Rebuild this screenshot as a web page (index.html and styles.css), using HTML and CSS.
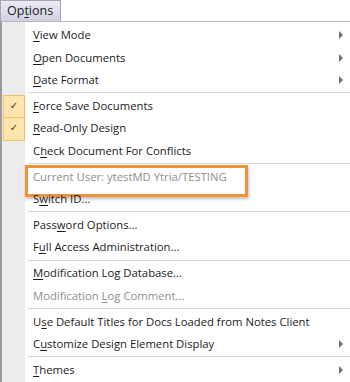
FILE: index.html
```html
<!DOCTYPE html>
<html lang="en">
<head>
  <meta charset="UTF-8" />
  <title>Options menu</title>
  <link rel="stylesheet" href="styles.css">
</head>
<body>
  <div class="menubar">
    <div class="tab">Op<u>t</u>ions</div>
  </div>
  <div class="menu">
    <div class="item sub"><u>V</u>iew Mode</div>
    <div class="item sub"><u>O</u>pen Documents</div>
    <div class="item sub"><u>D</u>ate Format</div>
    <div class="sep"></div>
    <div class="item checked"><u>F</u>orce Save Documents</div>
    <div class="item checked"><u>R</u>ead-Only Design</div>
    <div class="item">C<u>h</u>eck Document For Conflicts</div>
    <div class="sep"></div>
    <div class="item disabled marked">Current User: ytestMD Ytria/TESTING</div>
    <div class="item">S<u>w</u>itch ID...</div>
    <div class="sep"></div>
    <div class="item">Pass<u>w</u>ord Options...</div>
    <div class="item">F<u>u</u>ll Access Administration...</div>
    <div class="sep"></div>
    <div class="item"><u>M</u>odification Log Database...</div>
    <div class="item disabled">Modification <u>L</u>og Comment...</div>
    <div class="sep"></div>
    <div class="item">U<u>s</u>e Default Titles for Docs Loaded from Notes Client</div>
    <div class="item sub">C<u>u</u>stomize Design Element Display</div>
    <div class="sep"></div>
    <div class="item sub"><u>T</u>hemes</div>
  </div>
</body>
</html>
```

FILE: styles.css
```css
* {
  margin: 0;
  padding: 0;
  box-sizing: border-box;
}

body {
  width: 350px;
  height: 382px;
  overflow: hidden;
  background: #ffffff;
  font-family: 'Open Sans', sans-serif;
  font-size: 11.3px;
  color: #1b1b1b;
}

u {
  text-decoration-thickness: 1px;
  text-underline-offset: 2px;
}

.menubar {
  height: 21px;
  background: #ffffff;
}

.tab {
  width: 61px;
  height: 21px;
  padding: 2px 0 0 6px;
  border: 1px solid #a5a5b5;
  border-bottom: none;
  background: linear-gradient(#ececf4, #cfcfe0);
  font-size: 12.5px;
  line-height: 16px;
}

.menu {
  position: relative;
  height: 361px;
  border-left: 2px solid #9a9a9a;
  border-top: 1px solid #b8b8b8;
  background: linear-gradient(to right, #ececec 23px, #fbfbfb 23px, #fbfbfb 24px, #ffffff 24px);
  padding-top: 2px;
}

.item {
  position: relative;
  height: 22.5px;
  line-height: 22px;
  padding-left: 31px;
}

.item.disabled {
  color: #8e8e8e;
}

.sub::after {
  content: '';
  position: absolute;
  right: 7px;
  top: 7px;
  border-left: 4px solid #707070;
  border-top: 4px solid transparent;
  border-bottom: 4px solid transparent;
}

.checked::before {
  content: '\2713';
  position: absolute;
  left: 1px;
  top: 0;
  width: 20px;
  height: 22px;
  border: 1px solid #f4bd6a;
  background: #fde5ad;
  font-family: 'DejaVu Sans', sans-serif;
  font-size: 10px;
  font-weight: bold;
  line-height: 20px;
  text-align: center;
  color: #3a3a3a;
}

.marked::after {
  content: '';
  position: absolute;
  left: 23px;
  top: -1px;
  width: 217px;
  height: 26px;
  border: 3px solid #f0913c;
  box-shadow: 1px 2px 3px rgba(0, 0, 0, 0.25);
}

.sep {
  height: 2px;
  margin: 0.67px 0 0.67px 26px;
  border-top: 1px solid #d5d5d5;
  border-bottom: 1px solid #ffffff;
}
```
